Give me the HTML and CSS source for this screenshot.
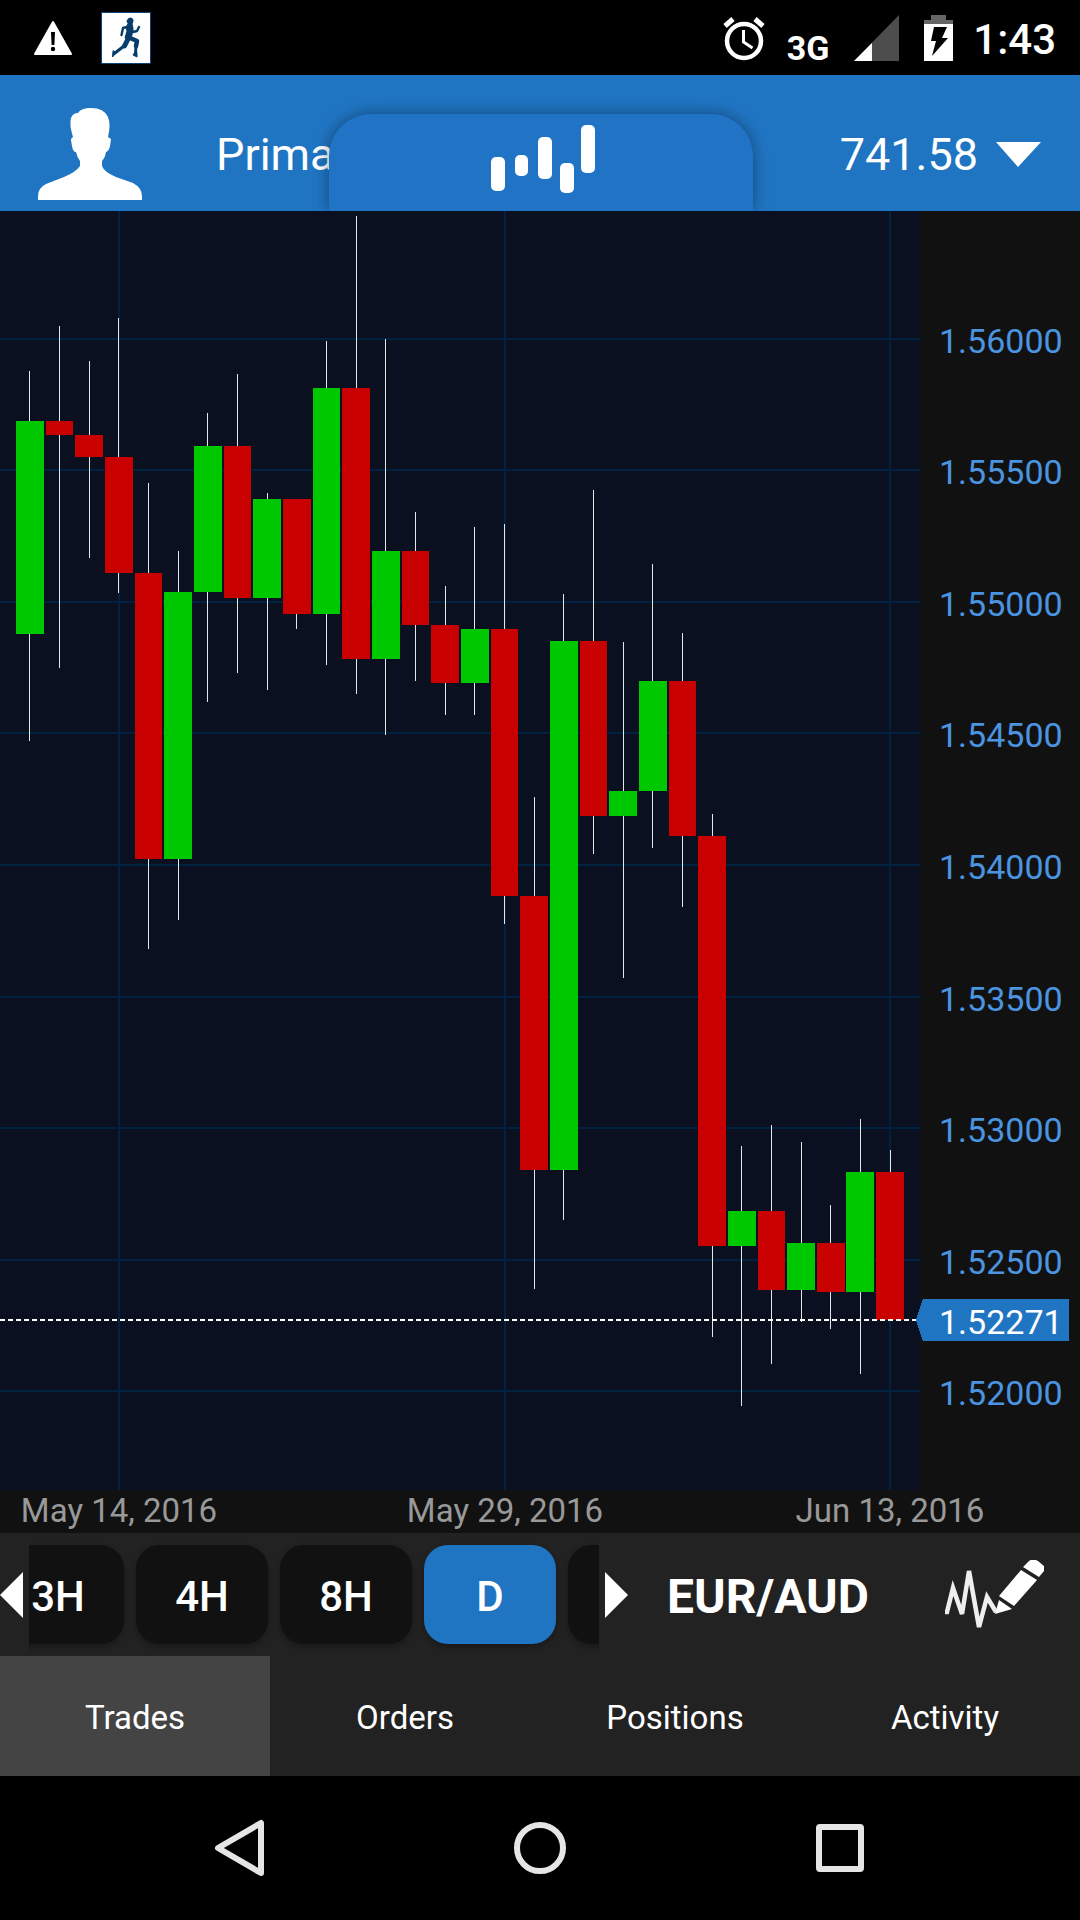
FILE: index.html
```html
<!DOCTYPE html>
<html lang="en">
  <head>
    <meta charset="utf-8">
    <meta name="viewport" content="width=device-width">
    <title>EUR/AUD</title>
    <link rel="stylesheet" href="styles.css">
  </head>

  <body>

    <div class="status">
      <svg class="warning" width="38" height="34" viewBox="0 0 38 34">
        <path d="M19 1 L37 33 H1 Z" fill="#fff" stroke="#fff" stroke-width="2" stroke-linejoin="round"/>
        <path d="M17 11h4l-.6 13h-2.8z" fill="#000"/>
        <circle cx="19" cy="28" r="2.2" fill="#000"/>
      </svg>
      <svg class="runner" width="50" height="52" viewBox="0 0 50 52">
        <rect x=".5" y=".5" width="49" height="51" fill="#fff" stroke="#0b427a"/>
        <g fill="#063d6c" stroke="#063d6c" stroke-linejoin="round" stroke-linecap="round">
          <path d="M26 9 Q27 5.500 30 6 Q32.500 6.500 32 9.500 L31 12 L32 16 L31 23 L28 28 L24 26 L26 19 L25 15 L27 12 Z" stroke-width="1"/>
          <path d="M26 15 L22 16 L20.500 23 M30 16 L32 20 L36 19 L38 15" fill="none" stroke-width="2.400"/>
          <path d="M27 25 L36 29 L35 34" fill="none" stroke-width="4.500"/>
          <path d="M35 33 L34.500 42" fill="none" stroke-width="3"/>
          <path d="M34 40 L32 43 L36 45 L36 41 Z" stroke-width="1"/>
          <path d="M27 27 L23.500 34" fill="none" stroke-width="5"/>
          <path d="M23 34 L14 41" fill="none" stroke-width="3"/>
          <path d="M12 39 L11.500 45 L15 41 Z" stroke-width="1"/>
        </g>
      </svg>
      <svg class="alarm" width="42" height="46" viewBox="0 0 42 46">
        <circle cx="21" cy="26" r="17" fill="none" stroke="#fff" stroke-width="4.500"/>
        <path d="M2 11 L10 4 M40 11 L32 4" stroke="#fff" stroke-width="5"/>
        <path d="M20.500 15 V27 L29.500 33" fill="none" stroke="#fff" stroke-width="3"/>
      </svg>
      <span class="network">3G</span>
      <svg class="signal" width="45" height="46" viewBox="0 0 45 46">
        <path d="M45 0 V46 H0 Z" fill="#4d4d4d"/>
        <path d="M18 28 V46 H0 Z" fill="#fff"/>
      </svg>
      <svg class="battery" width="29" height="46" viewBox="0 0 29 46">
        <path d="M7 0 H22 V5 H29 V9 H0 V5 H7 Z" fill="#666"/>
        <path d="M0 9 H29 V46 H0 Z" fill="#fff"/>
        <path d="M10 12 H23 L18 23 H24 L8 41 L12 26 H7 Z" fill="#000"/>
      </svg>
      <time>1:43</time>
    </div>

    <header>
      <button class="profile" aria-label="Profile">
        <svg width="104" height="92" viewBox="0 0 104 92">
          <path d="M0 92 V88 Q0 80 8 76 L26 69 Q38 64 42 58 V53 Q39 49 38 44 Q35 44 34 38 L33 32 Q33 30 35 29 Q31 16 33 10 Q35 5 40 5 Q43 0 53 0 Q66 0 70 9 Q73 16 70 29 L73 31 L72 38 Q71 43 68 44 Q67 50 64 53 V58 Q66 64 78 69 L95 75 Q104 80 104 88 V92 Z" fill="#fff"/>
        </svg>
      </button>
      <span class="account">Primary</span>
      <button class="balance">741.58
        <svg width="45" height="25" viewBox="0 0 45 25"><path d="M0 0 H45 L22 25 Z" fill="#fff"/></svg>
      </button>
      <button class="chart-tab" aria-label="Chart">
        <svg width="104" height="68" viewBox="0 0 104 68" fill="#fff">
          <rect x="0" y="32" width="14" height="34" rx="5"/>
          <rect x="24" y="30" width="13" height="21" rx="5"/>
          <rect x="47" y="12" width="14" height="42" rx="5"/>
          <rect x="69" y="38" width="14" height="30" rx="5"/>
          <rect x="90" y="0" width="14" height="48" rx="5"/>
        </svg>
      </button>
    </header>

    <svg id="chart" class="chart" viewBox="0 0 1080 1322"></svg>

    <div class="tools">
      <button class="arrow" aria-label="Shorter periods">
        <svg width="23" height="46" viewBox="0 0 23 46"><path d="M23 0 V46 L0 23 Z" fill="#fff"/></svg>
      </button>
      <div class="periods">
        <button>3H</button>
        <button>4H</button>
        <button>8H</button>
        <button class="active">D</button>
        <button aria-label="W"></button>
      </div>
      <button class="arrow" aria-label="Longer periods">
        <svg width="23" height="46" viewBox="0 0 23 46"><path d="M0 0 V46 L23 23 Z" fill="#fff"/></svg>
      </button>
      <button class="pair">EUR/AUD</button>
      <button class="draw" aria-label="Indicators">
        <svg width="99" height="70" viewBox="0 0 99 70">
          <path d="M0 52 H2 L8 28 L17 54 L24 11 L34 67 L42 37 L51 52" fill="none" stroke="#eee" stroke-width="4.500"/>
          <path d="M54 40 L67 49 L50 54 Z M76 10 L92 20 L69 46 L54 36 Z M78 7 L84 1 Q88 -2 93 1 L99 6 V11 L94 17 Z" fill="#fff"/>
        </svg>
      </button>
    </div>

    <nav class="tabs">
      <a href="#trades" class="active">Trades</a>
      <a href="#orders">Orders</a>
      <a href="#positions">Positions</a>
      <a href="#activity">Activity</a>
    </nav>

    <div class="system">
      <button aria-label="Back">
        <svg width="60" height="60" viewBox="0 0 60 60"><path d="M51 5 V55 L8 30 Z"/></svg>
      </button>
      <button aria-label="Home">
        <svg width="60" height="60" viewBox="0 0 60 60"><circle cx="30" cy="30" r="23"/></svg>
      </button>
      <button aria-label="Recent apps">
        <svg width="60" height="60" viewBox="0 0 60 60"><rect x="9" y="9" width="42" height="42" rx="1"/></svg>
      </button>
    </div>

    <script src="chart.js"></script>
  </body>
</html>
```
FILE: styles.css
```css
:root{
  --blue: #2075c3;
  --dark: #111;
  --panel: #222;
}

*{
  box-sizing: border-box;
}

body{
  margin: 0;
  background: #000;
  color: #fff;
  font-family: Roboto, sans-serif;
}

button{
  border: 0;
  padding: 0;
  background: none;
  color: inherit;
  font: inherit;
}

svg{
  display: block;
}

/* status bar */
.status{
  height: 75px;
  padding: 0 24px 0 34px;
  display: flex;
  align-items: center;
}

.runner{
  margin-left: 29px;
}

.alarm{
  margin-left: auto;
}

.network{
  margin: 20px 25px 0 22px;
  font-size: 34px;
  font-weight: 700;
}

.battery{
  margin: 0 20px 0 25px;
}

.status time{
  padding-top: 4px;
  font-size: 42px;
  font-weight: 500;
}

/* account bar */
header{
  position: relative;
  height: 136px;
  padding: 22px 39px 0 38px;
  display: flex;
  align-items: center;
  overflow: hidden;
  background: var(--blue);
  font-size: 45px;
}

.account{
  margin-left: 74px;
}

.balance{
  margin-left: auto;
  display: flex;
  align-items: center;
  gap: 18px;
}

.chart-tab{
  position: absolute;
  left: 2px;
  right: 0;
  bottom: 0;
  width: 424px;
  height: 97px;
  margin: auto;
  padding: 0 0 8px 4px;
  display: flex;
  align-items: center;
  justify-content: center;
  border-radius: 42px 42px 0 0;
  background: #2174c5;
  box-shadow: 0 0 16px rgba(0,0,0,.4);
}

/* chart */
.chart{
  width: 100%;
  background: var(--dark);
  font-size: 34px;
  shape-rendering: crispEdges;
}

.plot{
  fill: #0a101f;
}

.grid{
  stroke: #002240;
  stroke-width: 2;
}

.wick{
  fill: #e6e6e6;
}

.up{
  fill: #00c800;
}

.down{
  fill: #c80000;
}

.price{
  fill: #4a94e0;
}

.date{
  fill: #999;
  font-size: 33px;
  text-anchor: middle;
}

.current{
  stroke: #fff;
  stroke-width: 2;
  stroke-dasharray: 5 3;
}

.tag{
  fill: var(--blue);
}

.tag-text{
  fill: #fff;
}

/* period buttons */
.tools{
  height: 123px;
  display: flex;
  align-items: center;
  gap: 6px;
  background: var(--panel);
}

.periods{
  flex: 0 1 570px;
  height: 123px;
  padding-top: 12px;
  display: flex;
  gap: 12px;
  overflow: hidden;
}

.periods button{
  flex: none;
  width: 132px;
  height: 99px;
  padding-top: 3px;
  border-radius: 24px;
  background: var(--dark);
  box-shadow: 0 3px 6px rgba(0,0,0,.3);
  font-size: 42px;
  font-weight: 500;
}

.periods button:first-child{
  margin-left: -37px;
}

.periods .active{
  background: var(--blue);
}

.pair{
  margin-left: 33px;
  padding-top: 3px;
  font-size: 48px;
  font-weight: 700;
}

.draw{
  margin: 0 36px 0 auto;
}

/* bottom tabs */
.tabs{
  display: grid;
  grid-template-columns: repeat(4, 1fr);
  background: var(--panel);
}

.tabs a{
  height: 120px;
  padding-top: 2px;
  display: flex;
  align-items: center;
  justify-content: center;
  color: #fff;
  font-size: 33px;
  text-decoration: none;
}

.tabs .active{
  background: #444;
}

/* android buttons */
.system{
  height: 144px;
  padding: 0 90px;
  display: grid;
  grid-template-columns: repeat(3, 1fr);
}

.system button{
  display: flex;
  align-items: center;
  justify-content: center;
}

.system svg{
  fill: none;
  stroke: #e5e5e5;
  stroke-width: 6;
  stroke-linejoin: round;
}
```
FILE: chart.js
```js
// high, body top, body bottom, low, direction
const candles = [
  [160,210,423,530,'up'],
  [115,210,224,457,'down'],
  [150,224,246,347,'down'],
  [107,246,362,382,'down'],
  [272,362,648,738,'down'],
  [340,381,648,709,'up'],
  [202,235,381,491,'up'],
  [163,235,387,462,'down'],
  [282,288,387,479,'up'],
  [288,288,403,418,'down'],
  [130,177,403,454,'up'],
  [5,177,448,483,'down'],
  [128,340,448,524,'up'],
  [301,340,414,470,'down'],
  [375,414,472,504,'down'],
  [316,418,472,504,'up'],
  [313,418,685,713,'down'],
  [586,685,959,1078,'down'],
  [383,430,959,1009,'up'],
  [279,430,605,643,'down'],
  [431,580,605,767,'up'],
  [353,470,580,637,'up'],
  [422,470,625,696,'down'],
  [603,625,1035,1126,'down'],
  [935,1000,1035,1195,'up'],
  [914,1000,1079,1153,'down'],
  [931,1032,1079,1111,'up'],
  [994,1032,1081,1118,'down'],
  [908,961,1081,1163,'up'],
  [939,961,1109,1109,'down']
]

const prices = [
  [128,'1.56000'], [259,'1.55500'], [391,'1.55000'],
  [522,'1.54500'], [654,'1.54000'], [786,'1.53500'],
  [917,'1.53000'], [1049,'1.52500'], [1180,'1.52000']
]

const dates = [
  [119,'May 14, 2016'], [505,'May 29, 2016'], [890,'Jun 13, 2016']
]

const step = 29.66
let out = '<rect class="plot" width="920" height="1279"/>'

prices.forEach(([y, label]) => {
  out += `<line class="grid" x1="0" x2="920" y1="${y}" y2="${y}"/>`
  out += `<text class="price" x="939" y="${y + 14}">${label}</text>`
})

dates.forEach(([x, label]) => {
  out += `<line class="grid" x1="${x}" x2="${x}" y1="0" y2="1279"/>`
  out += `<text class="date" x="${x}" y="1311">${label}</text>`
})

candles.forEach(([high, top, bottom, low, dir], i) => {
  const left = Math.round(16 + i * step)
  const right = Math.round(43.7 + i * step)
  const mid = Math.round(29.4 + i * step)
  out += `<rect class="wick" x="${mid}" y="${high}" width="1" height="${low - high}"/>`
  out += `<rect class="${dir}" x="${left}" y="${top}" width="${right - left}" height="${bottom - top}"/>`
})

// last price
out += '<line class="current" x1="0" x2="917" y1="1109" y2="1109"/>'
out += '<path class="tag" d="M916 1109 L923 1088 H1069 V1130 H923 Z"/>'
out += '<text class="tag-text" x="939" y="1123">1.52271</text>'

document.getElementById('chart').innerHTML = out
```
